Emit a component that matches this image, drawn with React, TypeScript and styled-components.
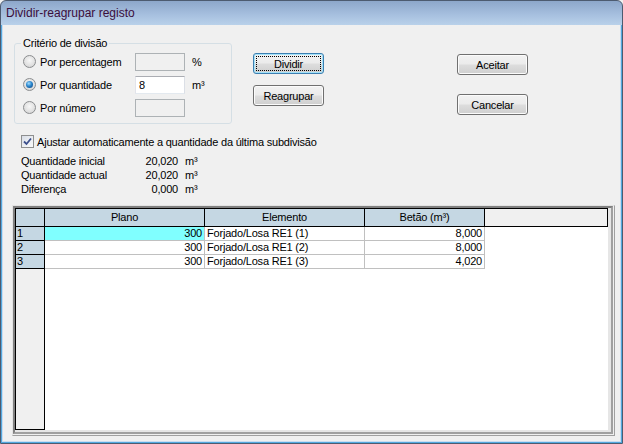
import { Fragment } from 'react';
import styled, { createGlobalStyle } from 'styled-components';

const GlobalStyle = createGlobalStyle`
  html, body {
    margin: 0;
    padding: 0;
    background: #f0f0f0;
  }
  body {
    width: 623px;
    height: 444px;
    overflow: hidden;
    font-family: "Liberation Sans", Arial, sans-serif;
  }
`;

const Window = styled.div`
  width: 623px;
  height: 444px;
  box-sizing: border-box;
  border: 1px solid #4d5b70;
  border-radius: 6px 6px 0 0;
  background: linear-gradient(#8da7ca 0px, #a7c0df 14px, #b9d1ea 24px);
  display: flex;
  flex-direction: column;
  overflow: hidden;
`;

const TitleBar = styled.div`
  height: 24px;
  flex: none;
  display: flex;
  align-items: center;
  padding-left: 5px;
  font-size: 12px;
  color: #3b0e3b;
`;

const Body = styled.div`
  flex: 1;
  display: flex;
  flex-direction: column;
  background: #f0f0f0;
  border: 1px solid #52a8df;
  border-top: 0;
  padding: 0 1px 1px 1px;
  box-shadow: inset 1px 0 #c9dcf0, inset -1px 0 #c9dcf0, inset 0 -1px #c9dcf0;
  font-size: 11px;
  letter-spacing: -0.2px;
  color: #000;
`;

const TopRow = styled.div`
  display: flex;
  align-items: flex-start;
  margin: 12px 0 0 11px;
  height: 87px;
`;

const GroupBox = styled.fieldset`
  box-sizing: border-box;
  width: 218px;
  height: 87px;
  margin: 0;
  padding: 0 6px 4px 8px;
  border: 1px solid #d5dfe5;
  border-radius: 3px;
`;

const Legend = styled.legend`
  padding: 0 2px;
  margin-left: -2px;
  line-height: 13px;
`;

const OptionRow = styled.div`
  display: flex;
  align-items: center;
  height: 23px;
`;

const Radio = styled.span<{ $checked?: boolean }>`
  width: 13px;
  height: 13px;
  box-sizing: border-box;
  border-radius: 50%;
  border: 1px solid #8b8d8f;
  background: radial-gradient(circle at 50% 40%, #f7f7f7 0%, #e2e2e2 55%, #cdcdcd 100%);
  display: inline-flex;
  align-items: center;
  justify-content: center;
  flex: none;

  &::after {
    content: '';
    width: 7px;
    height: 7px;
    border-radius: 50%;
    display: ${({ $checked }) => ($checked ? 'block' : 'none')};
    background: radial-gradient(circle at 40% 35%, #9fdcff 0%, #2b86cd 45%, #0c3c74 100%);
  }
`;

const OptionText = styled.span`
  width: 95px;
  margin-left: 4px;
  white-space: nowrap;
`;

const TextBox = styled.input`
  box-sizing: border-box;
  width: 50px;
  height: 18px;
  margin: 0;
  padding: 0 3px;
  font: inherit;
  color: #000;
  border: 1px solid;
  border-color: #abadb3 #dbdfe6 #e3e9ef #e2e3ea;
  background: #fff;
  outline: none;

  &:disabled {
    background: #f0f0f0;
    border-color: #adb2b5;
  }
`;

const Unit = styled.span`
  margin-left: 7px;
`;

const ButtonColumn = styled.div<{ $top: number; $left: number; $gap: number }>`
  display: flex;
  flex-direction: column;
  gap: ${({ $gap }) => $gap}px;
  margin-top: ${({ $top }) => $top}px;
  margin-left: ${({ $left }) => $left}px;
`;

const Button = styled.button<{ $default?: boolean }>`
  position: relative;
  box-sizing: border-box;
  width: 71px;
  height: 21px;
  padding: 0;
  font: 11px "Liberation Sans", Arial, sans-serif;
  letter-spacing: -0.2px;
  color: #000;
  border: 1px solid ${({ $default }) => ($default ? '#3c7fb1' : '#707070')};
  border-radius: 3px;
  background: linear-gradient(#f2f2f2 0%, #ebebeb 48%, #dddddd 52%, #cfcfcf 100%);
  box-shadow: inset 0 0 0 1px ${({ $default }) => ($default ? '#a3e2fa' : '#fbfbfb')};

  &::after {
    content: '';
    display: ${({ $default }) => ($default ? 'block' : 'none')};
    position: absolute;
    inset: 2px;
    border: 1px dotted #000;
  }
`;

const CheckRow = styled.div`
  display: flex;
  align-items: center;
  height: 15px;
  margin: 10px 0 0 18px;
`;

const CheckBox = styled.span`
  box-sizing: border-box;
  width: 13px;
  height: 13px;
  border: 1px solid #8e8f8f;
  background: linear-gradient(135deg, #d8dde6 0%, #eef0f4 60%, #fafafa 100%);
  display: inline-flex;
  align-items: center;
  justify-content: center;
  flex: none;
`;

const CheckText = styled.span`
  margin-left: 3px;
`;

const InfoTable = styled.div`
  display: grid;
  grid-template-columns: 100px 50px auto;
  grid-auto-rows: 14px;
  column-gap: 7px;
  align-items: center;
  margin: 5px 0 0 18px;
`;

const InfoValue = styled.span`
  text-align: right;
`;

const GridPanel = styled.div`
  box-sizing: border-box;
  width: 603px;
  height: 231px;
  margin: 9px 0 0 9px;
  border: 1px solid;
  border-color: #e3e3e3 #a0a0a0 #a0a0a0 #e3e3e3;
  padding: 0 1px 1px 0;
  display: flex;
`;

const GridFrame = styled.div`
  flex: 1;
  display: flex;
  border: 2px solid;
  border-color: #808080 #a0a0a0 #a0a0a0 #808080;
  padding: 0 3px 2px 0;
  background: #e6e6e6;
`;

const GridArea = styled.div`
  flex: 1;
  display: grid;
  grid-template-columns: 30px 160px 160px 120px 1fr;
  grid-template-rows: 19px repeat(3, 14px) 1fr;
  background: #fff;
  line-height: 13px;
`;

const Corner = styled.div`
  background: #c5d7e3;
  border: 1px solid #000;
`;

const HeaderCell = styled.div`
  background: #c5d7e3;
  border: 1px solid #000;
  border-left: 0;
  display: flex;
  align-items: center;
  justify-content: center;
`;

const HeaderFiller = styled.div`
  background: #f0f0f0;
  border: 1px solid #000;
  border-left: 0;
`;

const RowHead = styled.div`
  background: #c5d7e3;
  border: 1px solid #000;
  border-top: 0;
  padding-left: 1px;
`;

const RowStub = styled.div`
  background: #f0f0f0;
  border: 1px solid #000;
  border-top: 0;
`;

const Cell = styled.div<{ $align?: 'left' | 'right'; $highlight?: boolean }>`
  border-right: 1px solid #c0c0c0;
  border-bottom: 1px solid #c0c0c0;
  background: ${({ $highlight }) => ($highlight ? '#80ffff' : '#fff')};
  text-align: ${({ $align }) => $align ?? 'left'};
  padding: 0 2px;
  white-space: nowrap;
  overflow: hidden;
`;

const EmptyArea = styled.div<{ $span: number }>`
  grid-column: span ${({ $span }) => $span};
`;

const rows = [
  { n: 1, plano: '300', elemento: 'Forjado/Losa RE1 (1)', betao: '8,000' },
  { n: 2, plano: '300', elemento: 'Forjado/Losa RE1 (2)', betao: '8,000' },
  { n: 3, plano: '300', elemento: 'Forjado/Losa RE1 (3)', betao: '4,020' },
];

const options = [
  { label: 'Por percentagem', value: '', unit: '%', checked: false },
  { label: 'Por quantidade', value: '8', unit: 'm³', checked: true },
  { label: 'Por número', value: '', unit: '', checked: false },
];

const quantities = [
  { label: 'Quantidade inicial', value: '20,020' },
  { label: 'Quantidade actual', value: '20,020' },
  { label: 'Diferença', value: '0,000' },
];

export default function App() {
  return (
    <>
      <GlobalStyle />
      <Window>
        <TitleBar>Dividir-reagrupar registo</TitleBar>
        <Body>
          <TopRow>
            <GroupBox>
              <Legend>Critério de divisão</Legend>
              {options.map((o) => (
                <OptionRow key={o.label}>
                  <Radio $checked={o.checked} />
                  <OptionText>{o.label}</OptionText>
                  <TextBox value={o.value} disabled={!o.checked} readOnly />
                  {o.unit && <Unit>{o.unit}</Unit>}
                </OptionRow>
              ))}
            </GroupBox>
            <ButtonColumn $top={16} $left={21} $gap={11}>
              <Button $default>Dividir</Button>
              <Button>Reagrupar</Button>
            </ButtonColumn>
            <ButtonColumn $top={17} $left={133} $gap={19}>
              <Button>Aceitar</Button>
              <Button>Cancelar</Button>
            </ButtonColumn>
          </TopRow>

          <CheckRow>
            <CheckBox>
              <svg width="9" height="9" viewBox="0 0 9 9">
                <path d="M1 4.5 L3.5 7 L8 1.5" fill="none" stroke="#3c4f8c" strokeWidth="1.8" />
              </svg>
            </CheckBox>
            <CheckText>Ajustar automaticamente a quantidade da última subdivisão</CheckText>
          </CheckRow>

          <InfoTable>
            {quantities.map((q) => (
              <Fragment key={q.label}>
                <span>{q.label}</span>
                <InfoValue>{q.value}</InfoValue>
                <span>m³</span>
              </Fragment>
            ))}
          </InfoTable>

          <GridPanel>
            <GridFrame>
              <GridArea>
                <Corner />
                <HeaderCell>Plano</HeaderCell>
                <HeaderCell>Elemento</HeaderCell>
                <HeaderCell>Betão (m³)</HeaderCell>
                <HeaderFiller />
                {rows.map((r, i) => (
                  <Fragment key={r.n}>
                    <RowHead>{r.n}</RowHead>
                    <Cell $align="right" $highlight={i === 0}>{r.plano}</Cell>
                    <Cell>{r.elemento}</Cell>
                    <Cell $align="right">{r.betao}</Cell>
                    <EmptyArea $span={1} />
                  </Fragment>
                ))}
                <RowStub />
                <EmptyArea $span={4} />
              </GridArea>
            </GridFrame>
          </GridPanel>
        </Body>
      </Window>
    </>
  );
}
